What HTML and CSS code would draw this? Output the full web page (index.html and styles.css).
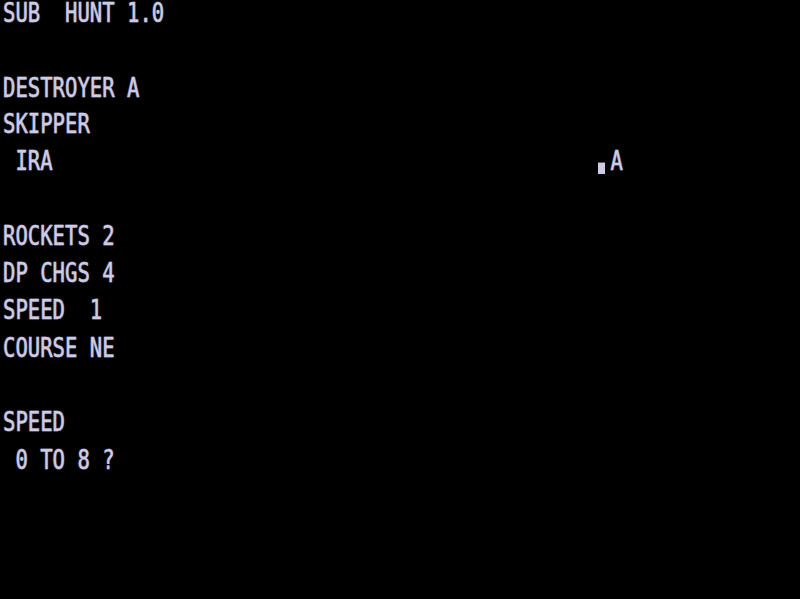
FILE: index.html
```html
<!DOCTYPE html>
<html>
<head>
<meta charset="utf-8">
<title>SUB HUNT 1.0</title>
<link rel="stylesheet" href="styles.css">
</head>
<body>
<div class="screen">
<div class="row">SUB  HUNT 1.0</div>
<div class="row"> </div>
<div class="row">DESTROYER A</div>
<div class="row">SKIPPER</div>
<div class="row"> IRA                                            <span class="blk"></span>A</div>
<div class="row"> </div>
<div class="row">ROCKETS 2</div>
<div class="row">DP CHGS 4</div>
<div class="row">SPEED  1</div>
<div class="row">COURSE NE</div>
<div class="row"> </div>
<div class="row">SPEED</div>
<div class="row"> 0 TO 8 ?</div>
</div>
</body>
</html>
```
FILE: styles.css
```css
html, body {
  margin: 0;
  padding: 0;
  background: #000;
  width: 800px;
  height: 599px;
  overflow: hidden;
}
.screen {
  padding-left: 3px;
  padding-top: 0;
  font-family: "DejaVu Sans Mono", monospace;
  font-size: 20.6px;
  color: #cecbe6;
  -webkit-text-stroke: 0.35px #cecbe6;
  text-shadow: 0 0 1.5px rgba(206, 203, 230, 0.55);
  transform: scaleY(1.27);
  transform-origin: 0 0;
}
.row {
  white-space: pre;
  height: 29.3px;
  line-height: 20px;
}
.blk {
  display: inline-block;
  width: 7px;
  height: 9.4px;
  margin-right: 5.4px;
  background: #cecbe6;
  vertical-align: -3px;
}
```
